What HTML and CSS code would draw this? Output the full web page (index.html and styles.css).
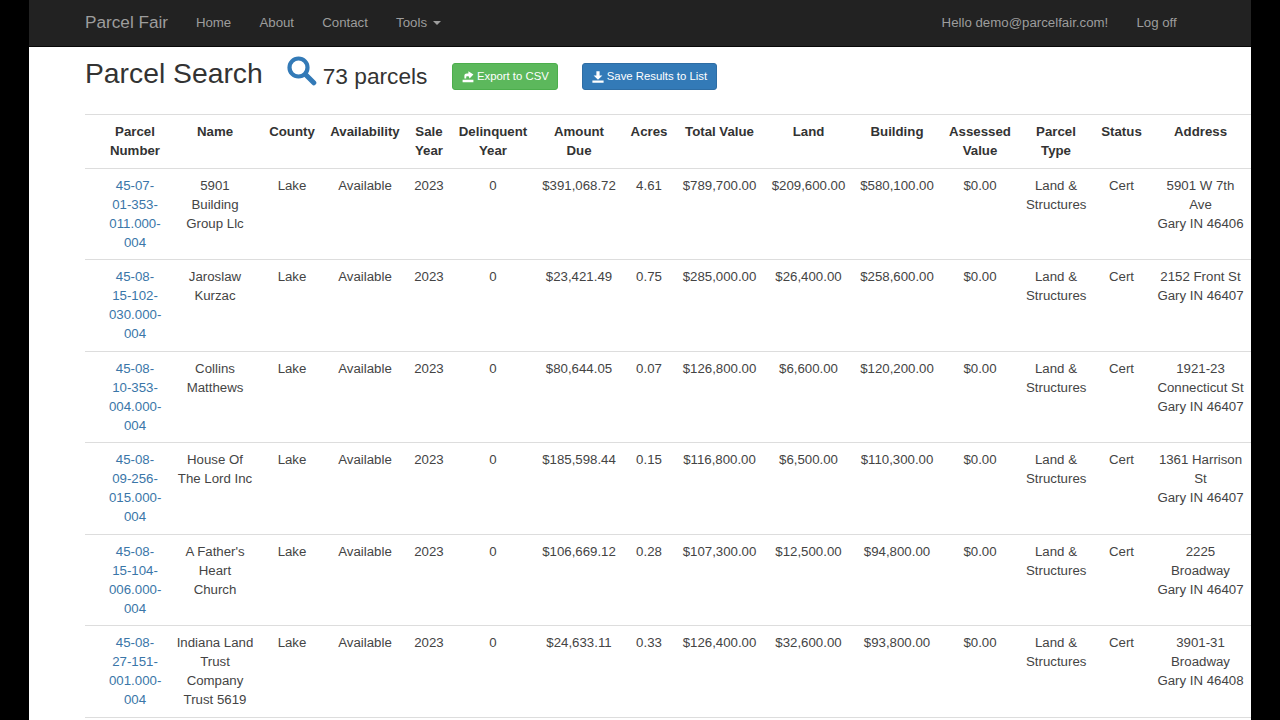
FILE: index.html
```html
<!DOCTYPE html>
<html lang="en">
<head>
<meta charset="utf-8">
<title>Parcel Search</title>
<link rel="stylesheet" href="styles.css">
</head>
<body>
<div class="page">
  <nav class="navbar">
    <a class="brand" href="#">Parcel Fair</a>
    <ul class="nav">
      <li><a href="#">Home</a></li>
      <li><a href="#">About</a></li>
      <li><a href="#">Contact</a></li>
      <li><a href="#">Tools <span class="caret"></span></a></li>
    </ul>
    <ul class="nav nav-right">
      <li><a href="#">Hello demo@parcelfair.com!</a></li>
      <li><a href="#">Log off</a></li>
    </ul>
  </nav>
  <main class="content">
    <div class="heading">
      <h2>Parcel Search</h2>
      <svg class="search-icon" viewBox="0 0 30 30" aria-hidden="true"><circle cx="11.5" cy="11.5" r="9" fill="none" stroke="#337ab7" stroke-width="4.2"/><path d="M18.5 18.5 L26.8 26.8" stroke="#337ab7" stroke-width="5" stroke-linecap="round"/></svg>
      <span class="count">73 parcels</span>
      <a class="btn btn-green" href="#"><svg class="btn-icon" viewBox="0 0 12 12" aria-hidden="true"><path d="M2.4 7.6V4.6C2.4 3.2 3.4 2.4 4.8 2.4H6.4V0.3L11.4 3.4 7.6 7.6 6.6 5.2H4.8C4.4 5.2 4.2 5.6 4.2 7.6Z M0.6 8.8H11.4V11.2H0.6Z" fill="#fff"/></svg>Export to CSV</a>
      <a class="btn btn-blue" href="#"><svg class="btn-icon" viewBox="0 0 12 12" aria-hidden="true"><path d="M4.4 0.3H7.6V4.4H10.4L6 8.8 1.6 4.4H4.4Z M0.4 9.6H11.6V11.7H0.4Z" fill="#fff"/></svg>Save Results to List</a>
    </div>
    <table class="parcels">
      <colgroup>
        <col class="c1"><col class="c2"><col class="c3"><col class="c4"><col class="c5"><col class="c6"><col class="c7"><col class="c8"><col class="c9"><col class="c10"><col class="c11"><col class="c12"><col class="c13"><col class="c14"><col class="c15">
      </colgroup>
      <thead>
        <tr><th>Parcel Number</th><th>Name</th><th>County</th><th>Availability</th><th>Sale Year</th><th>Delinquent Year</th><th>Amount Due</th><th>Acres</th><th>Total Value</th><th>Land</th><th>Building</th><th>Assessed Value</th><th>Parcel Type</th><th>Status</th><th>Address</th></tr>
      </thead>
      <tbody>
        <tr><td><a href="#">45-07-01-353-011.000-004</a></td><td>5901 Building Group Llc</td><td>Lake</td><td>Available</td><td>2023</td><td>0</td><td>$391,068.72</td><td>4.61</td><td>$789,700.00</td><td>$209,600.00</td><td>$580,100.00</td><td>$0.00</td><td>Land &amp; Structures</td><td>Cert</td><td>5901 W 7th Ave<br>Gary IN 46406</td></tr>
        <tr><td><a href="#">45-08-15-102-030.000-004</a></td><td>Jaroslaw Kurzac</td><td>Lake</td><td>Available</td><td>2023</td><td>0</td><td>$23,421.49</td><td>0.75</td><td>$285,000.00</td><td>$26,400.00</td><td>$258,600.00</td><td>$0.00</td><td>Land &amp; Structures</td><td>Cert</td><td>2152 Front St<br>Gary IN 46407</td></tr>
        <tr><td><a href="#">45-08-10-353-004.000-004</a></td><td>Collins Matthews</td><td>Lake</td><td>Available</td><td>2023</td><td>0</td><td>$80,644.05</td><td>0.07</td><td>$126,800.00</td><td>$6,600.00</td><td>$120,200.00</td><td>$0.00</td><td>Land &amp; Structures</td><td>Cert</td><td>1921-23 Connecticut St<br>Gary IN 46407</td></tr>
        <tr><td><a href="#">45-08-09-256-015.000-004</a></td><td>House Of The Lord Inc</td><td>Lake</td><td>Available</td><td>2023</td><td>0</td><td>$185,598.44</td><td>0.15</td><td>$116,800.00</td><td>$6,500.00</td><td>$110,300.00</td><td>$0.00</td><td>Land &amp; Structures</td><td>Cert</td><td>1361 Harrison St<br>Gary IN 46407</td></tr>
        <tr><td><a href="#">45-08-15-104-006.000-004</a></td><td>A Father's Heart Church</td><td>Lake</td><td>Available</td><td>2023</td><td>0</td><td>$106,669.12</td><td>0.28</td><td>$107,300.00</td><td>$12,500.00</td><td>$94,800.00</td><td>$0.00</td><td>Land &amp; Structures</td><td>Cert</td><td>2225 Broadway<br>Gary IN 46407</td></tr>
        <tr><td><a href="#">45-08-27-151-001.000-004</a></td><td>Indiana Land Trust Company Trust 5619</td><td>Lake</td><td>Available</td><td>2023</td><td>0</td><td>$24,633.11</td><td>0.33</td><td>$126,400.00</td><td>$32,600.00</td><td>$93,800.00</td><td>$0.00</td><td>Land &amp; Structures</td><td>Cert</td><td>3901-31 Broadway<br>Gary IN 46408</td></tr>
      </tbody>
    </table>
  </main>
</div>
</body>
</html>
```
FILE: styles.css
```css
* { box-sizing: border-box; }
html, body { margin: 0; height: 100%; background: #000; overflow: hidden; }
body { font-family: "Liberation Sans", Arial, sans-serif; font-size: 13.25px; line-height: 19px; color: #333; }
a { text-decoration: none; }
.page { width: 1222px; height: 720px; margin-left: 29px; background: #fff; overflow: hidden; }
.navbar { display: flex; align-items: center; height: 47px; padding: 0 60.2px 2px 56px; background: #222; border-bottom: 1px solid #080808; }
.brand { font-size: 17.2px; color: #9d9d9d; margin-right: 13.7px; }
.nav { display: flex; list-style: none; margin: 0; padding: 0; }
.nav a { display: block; padding: 0 14.1px; color: #9d9d9d; }
.nav-right { margin-left: auto; }
.caret { display: inline-block; width: 0; height: 0; margin-left: 2px; vertical-align: middle; border-top: 4px solid; border-left: 4px solid transparent; border-right: 4px solid transparent; }
.content { padding: 0 0 0 56px; }
.heading { display: flex; align-items: center; height: 67px; padding-bottom: 8px; }
.heading h2 { margin: 0 0 7px; font-size: 28.3px; font-weight: 500; line-height: 32px; color: #333; }
.search-icon { width: 30px; height: 30px; margin: 0 6px 12px 24px; flex: none; }
.count { font-size: 22.7px; margin-right: 25px; color: #333; }
.btn { display: inline-flex; align-items: center; height: 27px; padding: 0 8.5px; border: 1px solid; border-radius: 3px; color: #fff; font-size: 11.35px; }
.btn-icon { width: 12px; height: 12px; margin-right: 3px; flex: none; }
.btn-green { background: #5cb85c; border-color: #4cae4c; }
.btn-blue { background: #337ab7; border-color: #2e6da4; margin-left: 24px; }
.parcels { table-layout: fixed; width: 1166px; border-collapse: collapse; text-align: center; }
.parcels th, .parcels td { padding: 7px 7px 7.5px; vertical-align: top; }
.parcels th { border-top: 1px solid #ddd; border-bottom: 1px solid #ddd; font-weight: 700; color: #333; }
.parcels td { border-bottom: 1px solid #ddd; color: #444; }
.parcels th:first-child, .parcels td:first-child { padding-left: 24px; padding-right: 8px; }
.parcels th:last-child, .parcels td:last-child { padding-left: 6px; padding-right: 6px; }
.parcels td a { color: #3a76a8; }
.c1 { width: 84px; } .c2 { width: 92px; } .c3 { width: 62px; } .c4 { width: 84px; } .c5 { width: 44px; }
.c6 { width: 84px; } .c7 { width: 88px; } .c8 { width: 52px; } .c9 { width: 89px; } .c10 { width: 89px; }
.c11 { width: 88px; } .c12 { width: 78px; } .c13 { width: 74px; } .c14 { width: 57px; } .c15 { width: 101px; }
```
